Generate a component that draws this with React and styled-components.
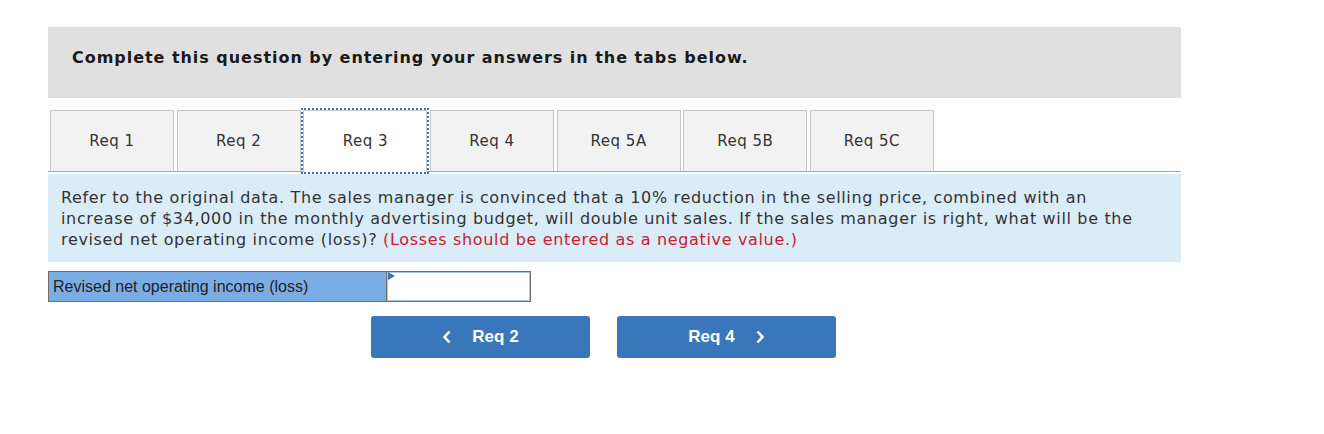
import React from "react";
import styled, { createGlobalStyle } from "styled-components";

const Global = createGlobalStyle`
  body {
    margin: 0;
    background: #fff;
    font-family: "DejaVu Sans", Verdana, sans-serif;
    color: #222;
  }
`;

const Page = styled.div`
  width: 1133px;
  padding: 27px 0 0 48px;
`;

const Header = styled.div`
  background: #e0e0e0;
  height: 71px;
  box-sizing: border-box;
  padding: 21px 0 0 24px;
  font-weight: bold;
  font-size: 16px;
  line-height: 20px;
  color: #1a1a1a;
  letter-spacing: 0.96px;
`;

const TabBar = styled.div`
  display: flex;
  margin-top: 11px;
  padding-left: 2px;
  border-bottom: 1px solid #a6a6a6;
  height: 62px;
  align-items: flex-end;
`;

const Tab = styled.div`
  box-sizing: border-box;
  width: 124px;
  margin-right: 2.67px;
  padding-bottom: ${(p) => (p.$active ? "1px" : "0")};
  display: flex;
  align-items: center;
  justify-content: center;
  font-size: 15px;
  letter-spacing: 0.5px;
  color: #333;
  background: ${(p) => (p.$active ? "#fff" : "#f2f2f2")};
  border: 1px solid #c6c6c6;
  border-bottom: none;
  margin-bottom: ${(p) => (p.$active ? "-1px" : "0")};
  height: ${(p) => (p.$active ? "62px" : "61px")};
  outline: ${(p) => (p.$active ? "2px dotted #3b73b5" : "none")};
`;

const Panel = styled.div`
  margin-top: 2px;
  background: #daecf8;
  padding: 13px 31px 12px 13px;
  font-size: 16px;
  line-height: 21px;
  letter-spacing: 0.66px;
  color: #333;
`;

const Red = styled.span`
  color: #c8202f;
`;

const AnswerRow = styled.div`
  display: flex;
  margin-top: 9px;
  width: 481px;
  height: 29px;
  border: 1px solid #6f6f6f;
`;

const Label = styled.div`
  width: 333px;
  background: #7aade4;
  border-right: 1px solid #6f6f6f;
  font-family: "Liberation Sans", Arial, sans-serif;
  font-size: 16px;
  color: #222;
  display: flex;
  align-items: center;
  padding-left: 4px;
`;

const InputCell = styled.div`
  flex: 1;
  position: relative;
  background: #fff;
  border: 1px solid #a9c6e6;
`;

const Flag = styled.span`
  position: absolute;
  left: 0;
  top: -1px;
  width: 0;
  height: 0;
  border-top: 4px solid transparent;
  border-bottom: 4px solid transparent;
  border-left: 7px solid #3b73b5;
`;

const Nav = styled.div`
  display: flex;
  gap: 27px;
  margin-top: 14px;
  padding-left: 323px;
`;

const NavButton = styled.button`
  width: 219px;
  height: 42px;
  background: #3a77ba;
  border: none;
  border-radius: 3px;
  color: #fff;
  font-family: "Liberation Sans", Arial, sans-serif;
  font-weight: bold;
  font-size: 17px;
  display: flex;
  align-items: center;
  justify-content: center;
  gap: 20px;
  padding: 0;
`;

const Chevron = ({ dir }) => (
  <svg width="10" height="14" viewBox="0 0 10 14">
    <path
      d={dir === "left" ? "M7.5 1.5 L2.5 7 L7.5 12.5" : "M2.5 1.5 L7.5 7 L2.5 12.5"}
      fill="none"
      stroke="#fff"
      strokeWidth="2.6"
    />
  </svg>
);

const tabs = ["Req 1", "Req 2", "Req 3", "Req 4", "Req 5A", "Req 5B", "Req 5C"];

export default function App() {
  return (
    <Page>
      <Global />
      <Header>Complete this question by entering your answers in the tabs below.</Header>
      <TabBar>
        {tabs.map((t) => (
          <Tab key={t} $active={t === "Req 3"}>
            {t}
          </Tab>
        ))}
      </TabBar>
      <Panel>
        Refer to the original data. The sales manager is convinced that a 10% reduction in the
        selling price, combined with an increase of $34,000 in the monthly advertising budget, will
        double unit sales. If the sales manager is right, what will be the revised net operating
        income (loss)? <Red>(Losses should be entered as a negative value.)</Red>
      </Panel>
      <AnswerRow>
        <Label>Revised net operating income (loss)</Label>
        <InputCell>
          <Flag />
        </InputCell>
      </AnswerRow>
      <Nav>
        <NavButton>
          <Chevron dir="left" />
          Req 2
        </NavButton>
        <NavButton>
          Req 4
          <Chevron dir="right" />
        </NavButton>
      </Nav>
    </Page>
  );
}
